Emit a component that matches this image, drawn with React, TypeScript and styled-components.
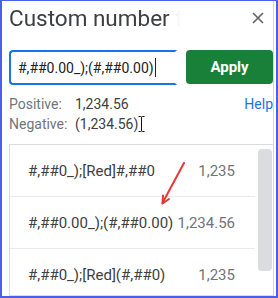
import React from 'react';
import styled, { createGlobalStyle } from 'styled-components';

const GlobalStyle = createGlobalStyle`
    html, body {
        margin: 0;
        padding: 0;
        background: #ffffff;
    }
    body {
        font-family: Roboto, "Noto Sans", Arial, sans-serif;
    }
`

interface Formato {
    padrao: string;
    exemplo: string;
}

const formatos: Formato[] = [
    { padrao: '#,##0_);[Red]#,##0', exemplo: '1,235' },
    { padrao: '#,##0.00_);(#,##0.00)', exemplo: '1,234.56' },
    { padrao: '#,##0_);[Red](#,##0)', exemplo: '1,235' },
];

const Moldura = styled.div `
    position: relative;
    width: 278px;
    height: 298px;
    box-sizing: border-box;
    border: 2px solid #4a5ee8;
    border-top-width: 1px;
    overflow: hidden;
    background: #ffffff;
`

const Dialogo = styled.div `
    height: 100%;
    margin-right: 2px;
    box-sizing: border-box;
    border-right: 1px solid #d6d6d6;
    padding: 3px 0 0 7px;
    display: flex;
    flex-direction: column;
`

const Cabecalho = styled.div `
    display: flex;
    align-items: center;
    justify-content: space-between;
    height: 28px;
    padding-right: 9px;
`

const Titulo = styled.h1 `
    margin: 0;
    width: 172px;
    font-size: 22.5px;
    line-height: 28px;
    font-weight: 400;
    color: #3c4043;
    white-space: nowrap;
    overflow: hidden;
    -webkit-mask-image: linear-gradient(90deg, #000 160px, rgba(0, 0, 0, 0.15) 164px, transparent 172px);
    mask-image: linear-gradient(90deg, #000 160px, rgba(0, 0, 0, 0.15) 164px, transparent 172px);
`

const Fechar = styled.button `
    border: 0;
    background: none;
    padding: 0;
    width: 12px;
    height: 12px;
    display: flex;
    cursor: pointer;
`

const LinhaEntrada = styled.div `
    display: flex;
    align-items: flex-start;
    gap: 9px;
    margin-top: 18px;
`

const Entrada = styled.div `
    width: 168px;
    height: 35px;
    box-sizing: border-box;
    border: 2px solid #1a73e8;
    border-right-color: transparent;
    border-radius: 4px 0 0 4px;
    padding-left: 7px;
    display: flex;
    align-items: center;
    font-size: 14px;
    color: #202124;
    white-space: nowrap;
`

const Cursor = styled.span `
    display: inline-block;
    width: 1px;
    height: 19px;
    margin-left: 1px;
    background: #202124;
`

const Botao = styled.button `
    flex: 1;
    height: 34px;
    border: 0;
    border-radius: 4px;
    background: #188038;
    color: #ffffff;
    font-family: inherit;
    font-size: 15px;
    font-weight: 700;
    cursor: pointer;
`

const Amostras = styled.div `
    display: grid;
    grid-template-columns: 66px 1fr auto;
    grid-auto-rows: 20px;
    align-items: center;
    margin-top: 9px;
    font-size: 14px;
`

const Rotulo = styled.span `
    color: #70757a;
`

const Valor = styled.span `
    color: #3c4043;
    display: flex;
    align-items: center;
`

const Ajuda = styled.a `
    color: #1a73e8;
    text-decoration: none;
    margin-right: 0;
`

const Lista = styled.div `
    margin-top: 10px;
    flex: 1;
    border: 1px solid #dadce0;
    border-right: 0;
    display: flex;
    min-height: 0;
`

const Linhas = styled.div `
    flex: 1;
    display: flex;
    flex-direction: column;
`

const Linha = styled.div `
    height: 51px;
    flex-shrink: 0;
    border-bottom: 1px solid #e8eaed;
    display: flex;
    align-items: center;
    justify-content: space-between;
    padding: 0 20px 0 18px;
    font-size: 15px;
    white-space: nowrap;
`

const Padrao = styled.span `
    color: #3c4043;
`

const Exemplo = styled.span `
    color: #70757a;
`

const Trilha = styled.div `
    width: 14px;
    padding: 4px 1px 0 3px;
`

const Polegar = styled.div `
    height: 122px;
    border-radius: 4px;
    background: #dadce0;
`

const Seta = styled.svg `
    position: absolute;
    left: 150px;
    top: 155px;
    pointer-events: none;
`

const App: React.FC = () => {
    return (
        <>
            <GlobalStyle />
            <Moldura>
                <Dialogo>
                    <Cabecalho>
                        <Titulo>Custom number formats</Titulo>
                        <Fechar aria-label="Close">
                            <svg width="12" height="12" viewBox="0 0 12 12">
                                <path d="M1 1 L11 11 M11 1 L1 11" stroke="#5f6368" strokeWidth="1.6" />
                            </svg>
                        </Fechar>
                    </Cabecalho>
                    <LinhaEntrada>
                        <Entrada>
                            #,##0.00_);(#,##0.00)<Cursor />
                        </Entrada>
                        <Botao>Apply</Botao>
                    </LinhaEntrada>
                    <Amostras>
                        <Rotulo>Positive:</Rotulo>
                        <Valor>1,234.56</Valor>
                        <Ajuda href="#">Help</Ajuda>
                        <Rotulo>Negative:</Rotulo>
                        <Valor>
                            (1,234.56)
                            <svg width="7" height="16" viewBox="0 0 7 16">
                                <path d="M0.5 0.5 H2.5 Q3.5 0.5 3.5 1.5 V14.5 Q3.5 15.5 2.5 15.5 H0.5 M6.5 0.5 H4.5 Q3.5 0.5 3.5 1.5 M3.5 14.5 Q3.5 15.5 4.5 15.5 H6.5" stroke="#111" strokeWidth="1" fill="none" />
                            </svg>
                        </Valor>
                        <span />
                    </Amostras>
                    <Lista>
                        <Linhas>
                            {formatos.map((f) => (
                                <Linha key={f.padrao}>
                                    <Padrao>{f.padrao}</Padrao>
                                    <Exemplo>{f.exemplo}</Exemplo>
                                </Linha>
                            ))}
                        </Linhas>
                        <Trilha>
                            <Polegar />
                        </Trilha>
                    </Lista>
                </Dialogo>
                <Seta width="40" height="52" viewBox="0 0 40 52">
                    <path d="M32 7 L10.5 47" stroke="#e53935" strokeWidth="2" strokeLinecap="round" />
                    <path d="M11 39.5 L10.5 47.5 L17 43" stroke="#e53935" strokeWidth="2" fill="none" strokeLinecap="round" strokeLinejoin="round" />
                </Seta>
            </Moldura>
        </>
    );
}

export default App
